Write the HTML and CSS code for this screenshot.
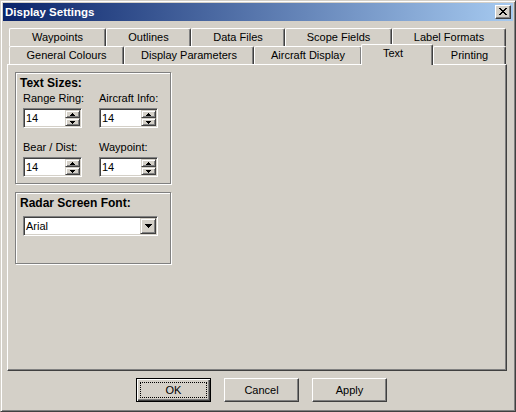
FILE: index.html
```html
<!DOCTYPE html>
<html>
<head>
<meta charset="utf-8">
<title>Display Settings</title>
<link rel="stylesheet" href="styles.css">
</head>
<body>
<div class="window">
  <div class="titlebar">
    <span class="title">Display Settings</span>
    <div class="close">
      <svg width="8" height="7" viewBox="0 0 8 7" shape-rendering="crispEdges"><polygon points="0,0 2,0 2,1 3,1 3,2 5,2 5,1 6,1 6,0 8,0 8,1 7,1 7,2 6,2 6,3 5,3 5,4 6,4 6,5 7,5 7,6 8,6 8,7 6,7 6,6 5,6 5,5 3,5 3,6 2,6 2,7 0,7 0,6 1,6 1,5 2,5 2,4 3,4 3,3 2,3 2,2 1,2 1,1 0,1" fill="#000"/></svg>
    </div>
  </div>
  <div class="content">
    <div class="tabs">
      <div class="tabrow">
        <div class="tab t-waypoints">Waypoints</div>
        <div class="tab t-outlines">Outlines</div>
        <div class="tab t-datafiles">Data Files</div>
        <div class="tab t-scope">Scope Fields</div>
        <div class="tab t-label">Label Formats</div>
      </div>
      <div class="tabrow">
        <div class="tab t-general">General Colours</div>
        <div class="tab t-params">Display Parameters</div>
        <div class="tab t-aircraft">Aircraft Display</div>
        <div class="tab t-text sel">Text</div>
        <div class="tab t-printing">Printing</div>
      </div>
    </div>
    <div class="panel">
      <div class="group">
        <div class="group-title">Text Sizes:</div>
        <div class="fields">
          <div class="field">
            <div class="label">Range Ring:</div>
            <div class="spin"><span class="val">14</span>
              <div class="spinbtns">
                <div class="sbtn"><svg width="5" height="3" viewBox="0 0 5 3" shape-rendering="crispEdges"><polygon points="2,0 3,0 3,1 4,1 4,2 5,2 5,3 0,3 0,2 1,2 1,1 2,1" fill="#000"/></svg></div>
                <div class="sbtn"><svg width="5" height="3" viewBox="0 0 5 3" shape-rendering="crispEdges"><polygon points="0,0 5,0 5,1 4,1 4,2 3,2 3,3 2,3 2,2 1,2 1,1 0,1" fill="#000"/></svg></div>
              </div>
            </div>
          </div>
          <div class="field">
            <div class="label">Aircraft Info:</div>
            <div class="spin"><span class="val">14</span>
              <div class="spinbtns">
                <div class="sbtn"><svg width="5" height="3" viewBox="0 0 5 3" shape-rendering="crispEdges"><polygon points="2,0 3,0 3,1 4,1 4,2 5,2 5,3 0,3 0,2 1,2 1,1 2,1" fill="#000"/></svg></div>
                <div class="sbtn"><svg width="5" height="3" viewBox="0 0 5 3" shape-rendering="crispEdges"><polygon points="0,0 5,0 5,1 4,1 4,2 3,2 3,3 2,3 2,2 1,2 1,1 0,1" fill="#000"/></svg></div>
              </div>
            </div>
          </div>
          <div class="field">
            <div class="label">Bear / Dist:</div>
            <div class="spin"><span class="val">14</span>
              <div class="spinbtns">
                <div class="sbtn"><svg width="5" height="3" viewBox="0 0 5 3" shape-rendering="crispEdges"><polygon points="2,0 3,0 3,1 4,1 4,2 5,2 5,3 0,3 0,2 1,2 1,1 2,1" fill="#000"/></svg></div>
                <div class="sbtn"><svg width="5" height="3" viewBox="0 0 5 3" shape-rendering="crispEdges"><polygon points="0,0 5,0 5,1 4,1 4,2 3,2 3,3 2,3 2,2 1,2 1,1 0,1" fill="#000"/></svg></div>
              </div>
            </div>
          </div>
          <div class="field">
            <div class="label">Waypoint:</div>
            <div class="spin"><span class="val">14</span>
              <div class="spinbtns">
                <div class="sbtn"><svg width="5" height="3" viewBox="0 0 5 3" shape-rendering="crispEdges"><polygon points="2,0 3,0 3,1 4,1 4,2 5,2 5,3 0,3 0,2 1,2 1,1 2,1" fill="#000"/></svg></div>
                <div class="sbtn"><svg width="5" height="3" viewBox="0 0 5 3" shape-rendering="crispEdges"><polygon points="0,0 5,0 5,1 4,1 4,2 3,2 3,3 2,3 2,2 1,2 1,1 0,1" fill="#000"/></svg></div>
              </div>
            </div>
          </div>
        </div>
      </div>
      <div class="group group-font">
        <div class="group-title">Radar Screen Font:</div>
        <div class="combo"><span class="val">Arial</span>
          <div class="dropbtn"><svg width="7" height="4" viewBox="0 0 7 4" shape-rendering="crispEdges"><polygon points="0,0 7,0 7,1 6,1 6,2 5,2 5,3 4,3 4,4 3,4 3,3 2,3 2,2 1,2 1,1 0,1" fill="#000"/></svg></div>
        </div>
      </div>
    </div>
    <div class="buttons">
      <div class="btn default">OK</div>
      <div class="btn">Cancel</div>
      <div class="btn">Apply</div>
    </div>
  </div>
</div>
</body>
</html>
```

FILE: styles.css
```css
* { box-sizing: border-box; }
html, body { margin: 0; padding: 0; }
body {
  width: 516px;
  height: 412px;
  overflow: hidden;
  background: #d4d0c8;
  font-family: "Liberation Sans", Arial, sans-serif;
  font-size: 11px;
  color: #000;
}
.window {
  width: 516px;
  height: 412px;
  background: #d4d0c8;
  border: 1px solid;
  border-color: #d4d0c8 #404040 #404040 #d4d0c8;
  box-shadow: inset 1px 1px #fff, inset -1px -1px #808080;
  padding: 2px;
  display: flex;
  flex-direction: column;
}
.titlebar {
  height: 18px;
  flex: none;
  display: flex;
  align-items: center;
  justify-content: space-between;
  padding: 0 2px;
  background: linear-gradient(to right, #0a246a, #a6caf0);
}
.title {
  color: #fff;
  font-weight: bold;
  font-size: 11.5px;
  line-height: 14px;
  white-space: nowrap;
}
.close {
  width: 16px;
  height: 14px;
  background: #d4d0c8;
  border: 1px solid;
  border-color: #fff #404040 #404040 #fff;
  box-shadow: inset -1px -1px #808080;
  display: flex;
  align-items: center;
  justify-content: center;
  padding: 0 1px 1px 0;
}
.close svg { display: block; }
.content {
  padding: 7px 4px 0 4px;
  display: flex;
  flex-direction: column;
}
.tabs {
  margin-left: 2px;
  width: 497px;
}
.tabrow {
  display: flex;
  height: 18px;
}
.tab {
  height: 18px;
  flex: none;
  background: #d4d0c8;
  border-top: 1px solid #fff;
  border-left: 1px solid #fff;
  border-right: 1px solid #404040;
  box-shadow: inset -1px 0 #808080;
  border-radius: 2px 2px 0 0;
  text-align: center;
  line-height: 17px;
  white-space: nowrap;
}
.t-waypoints { width: 97px; }
.t-outlines { width: 85px; }
.t-datafiles { width: 94px; }
.t-scope { width: 107px; }
.t-label { width: 114px; }
.t-general { width: 115px; }
.t-params { width: 130px; }
.t-aircraft { width: 108px; }
.t-text { width: 72px; }
.t-printing { width: 73px; }
.tab.sel {
  height: 21px;
  margin-top: -2px;
  margin-left: -1px;
  position: relative;
  z-index: 1;
  line-height: 16px;
  padding-right: 8px;
}
.panel {
  width: 500px;
  height: 307px;
  flex: none;
  border: 1px solid;
  border-color: #fff #404040 #404040 #fff;
  box-shadow: inset -1px -1px #808080;
  padding: 7px 0 0 7px;
}
.group {
  width: 156px;
  border: 1px solid #808080;
  box-shadow: inset 1px 1px #fff, 1px 1px #fff;
  padding: 3px 0 6px 4px;
}
.group-font {
  margin-top: 8px;
  padding-bottom: 27px;
}
.group-title {
  font-weight: bold;
  font-size: 12px;
  line-height: 14px;
  white-space: nowrap;
}
.fields {
  display: grid;
  grid-template-columns: 59px 59px;
  column-gap: 17px;
  row-gap: 13px;
  margin-top: 2px;
  padding-left: 3px;
}
.label {
  line-height: 13px;
  margin-bottom: 3px;
  white-space: nowrap;
}
.spin, .combo {
  height: 20px;
  background: #fff;
  border: 1px solid;
  border-color: #808080 #fff #fff #808080;
  box-shadow: inset 1px 1px #404040, inset -1px -1px #d4d0c8;
  display: flex;
  padding: 1px 1px 1px 2px;
}
.spin { width: 59px; }
.combo { width: 135px; margin-left: 3px; margin-top: 6px; }
.val {
  flex: 1;
  line-height: 16px;
  padding-left: 0;
}
.spinbtns {
  width: 15px;
  height: 16px;
  display: flex;
  flex-direction: column;
}
.sbtn, .dropbtn {
  background: #d4d0c8;
  border: 1px solid;
  border-color: #d4d0c8 #404040 #404040 #d4d0c8;
  box-shadow: inset 1px 1px #fff, inset -1px -1px #808080;
  display: flex;
  align-items: center;
  justify-content: center;
}
.sbtn { height: 8px; }
.sbtn svg, .dropbtn svg { display: block; }
.dropbtn {
  width: 16px;
  height: 16px;
}
.buttons {
  display: flex;
  gap: 13px;
  margin-top: 7px;
  padding-left: 129px;
}
.btn {
  width: 75px;
  height: 24px;
  background: #d4d0c8;
  border: 1px solid;
  border-color: #fff #404040 #404040 #fff;
  box-shadow: inset -1px -1px #808080;
  text-align: center;
  line-height: 22px;
}
.btn.default {
  position: relative;
  border: 1px solid #000;
  box-shadow: inset 1px 1px #fff, inset -1px -1px #404040, inset -2px -2px #808080;
}
.btn.default::after {
  content: "";
  position: absolute;
  left: 3px;
  top: 3px;
  right: 3px;
  bottom: 3px;
  border: 1px dotted #000;
}
```
